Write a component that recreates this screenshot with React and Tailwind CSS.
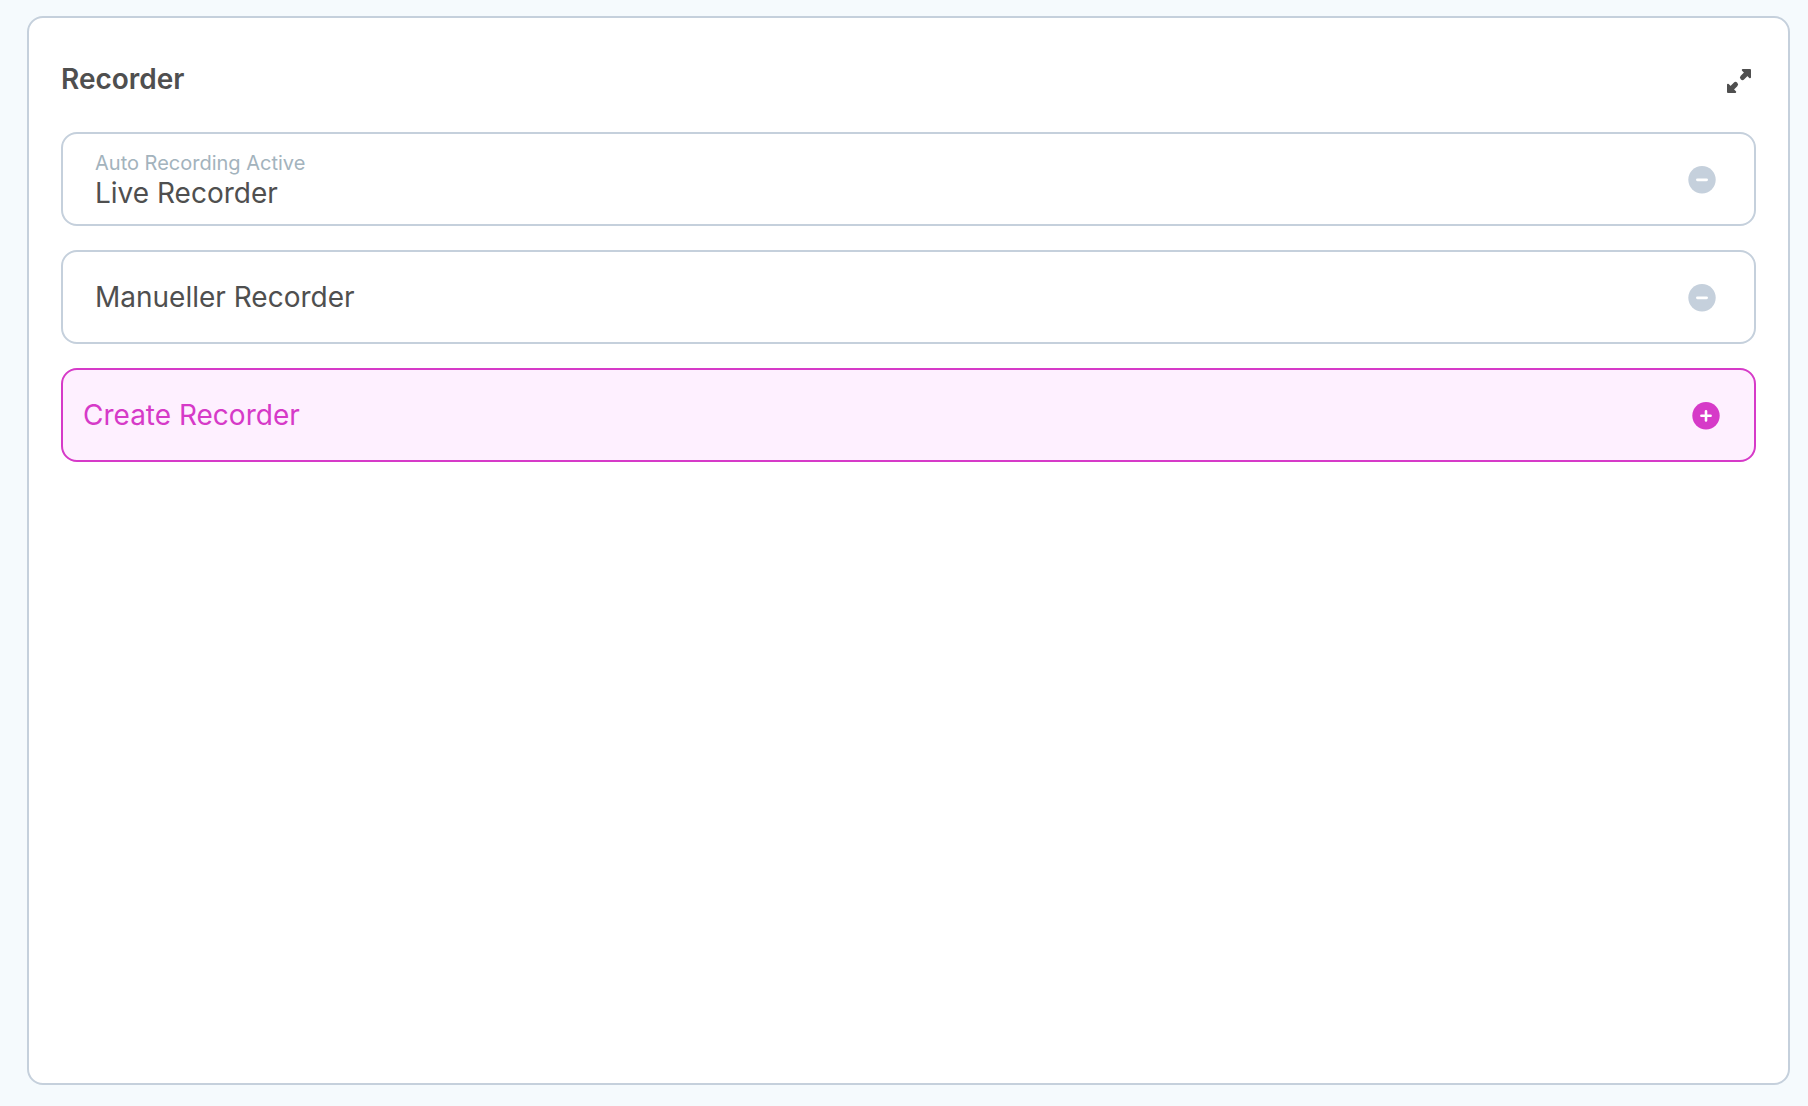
const recorders = [
  { id: 'live', name: 'Live Recorder', status: 'Auto Recording Active' },
  { id: 'manual', name: 'Manueller Recorder' },
]

function ExpandIcon() {
  return (
    <svg viewBox="0 0 24 24" fill="currentColor" stroke="currentColor" strokeLinecap="round" strokeLinejoin="round" className="w-6 h-6" aria-hidden="true">
      <path d="M15.8 1H23V8.2Z" strokeWidth="2" />
      <path d="M1 15.8V23H8.2Z" strokeWidth="2" />
      <path d="M20 4L15.5 8.5M4 20L8.5 15.5" strokeWidth="5" />
    </svg>
  )
}

function MinusIcon() {
  return (
    <svg viewBox="0 0 28 30" className="w-7 h-[30px]" aria-hidden="true">
      <circle cx="14" cy="15.8" r="13.7" fill="currentColor" />
      <path d="M9.4 15.8H18.6" stroke="white" strokeWidth="2.8" strokeLinecap="round" />
    </svg>
  )
}

function PlusIcon() {
  return (
    <svg viewBox="0 0 28 30" className="w-7 h-[30px]" aria-hidden="true">
      <circle cx="14" cy="15.8" r="13.7" fill="currentColor" />
      <path d="M9.4 15.8H18.6M14 11.2V20.4" stroke="white" strokeWidth="2.6" strokeLinecap="round" />
    </svg>
  )
}

function RecorderRow({ name, status }) {
  return (
    <li className="flex items-center justify-between h-[94px] pl-8 pr-[38px] rounded-2xl border-2 border-[#c5d0dc]">
      <div>
        {status && <p className="text-xl leading-7 text-[#a3b3bd]">{status}</p>}
        <p className="text-[28px] leading-8">{name}</p>
      </div>
      <button type="button" aria-label={`${name} entfernen`} className="text-[#c5d0dc]">
        <MinusIcon />
      </button>
    </li>
  )
}

export default function App() {
  return (
    <div className="flex min-h-screen bg-[#f5fafd] pt-4 pr-[18px] pb-[21px] pl-[27px] font-['Inter',sans-serif] text-[#4f4f4f]">
      <section className="flex-1 p-8 bg-white rounded-2xl border-2 border-[#c5d0dc]">
        <header className="flex items-center justify-between h-[58px] mb-6">
          <h2 className="text-[28px] leading-8 font-semibold">Recorder</h2>
          <button type="button" aria-label="Maximieren" className="px-[5px] pt-1">
            <ExpandIcon />
          </button>
        </header>
        <ul className="space-y-6">
          {recorders.map((r) => (
            <RecorderRow key={r.id} name={r.name} status={r.status} />
          ))}
        </ul>
        <button
          type="button"
          className="flex items-center justify-between w-full h-[94px] mt-6 pl-5 pr-[34px] rounded-2xl border-2 border-[#d63ac8] bg-[#fef0ff] text-[28px] leading-8 text-[#d63ac8]"
        >
          Create Recorder
          <PlusIcon />
        </button>
      </section>
    </div>
  )
}
